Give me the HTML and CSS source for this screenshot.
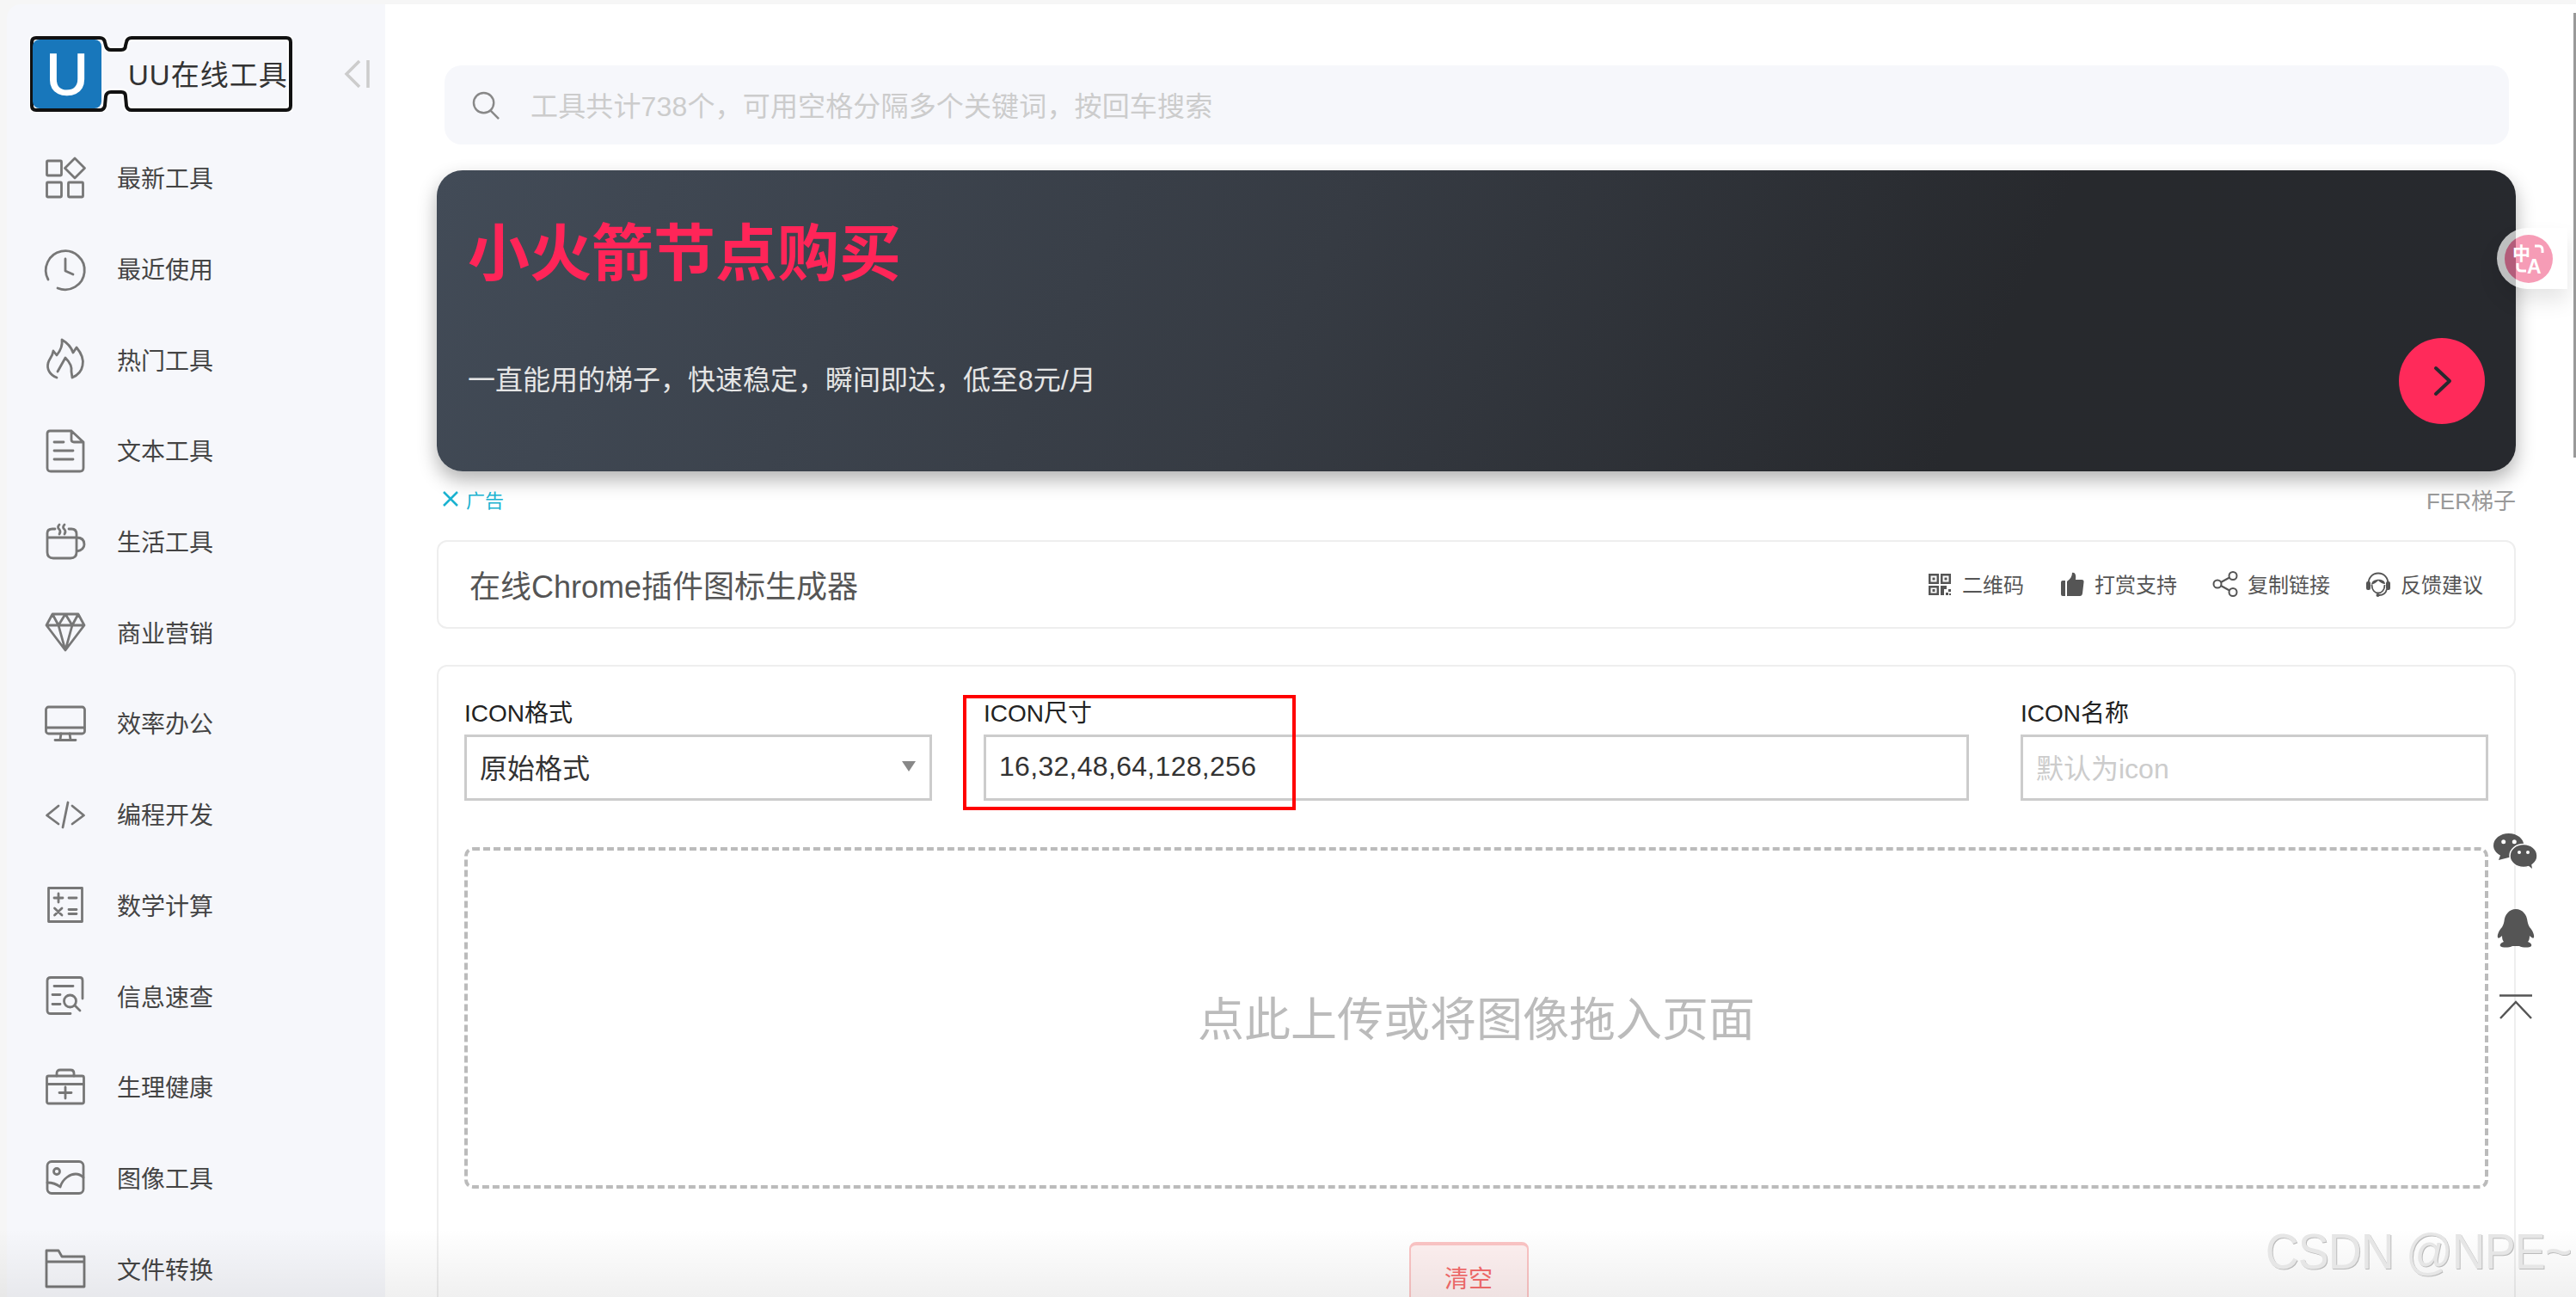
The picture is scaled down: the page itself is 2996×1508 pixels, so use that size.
FILE: index.html
```html
<!DOCTYPE html>
<html lang="zh-CN">
<head>
  <meta charset="utf-8">
  <title>在线Chrome插件图标生成器 - UU在线工具</title>
  <link rel="stylesheet" href="styles.css">
</head>
<body>
  <div class="app">
    <div class="sidebar">
      <div class="logo-row">
        <svg class="logo" viewBox="0 0 306 88">
          <path class="logo-halo" d="M8 2H82Q87 2 88 7L89 11Q90 16 95 16H107Q112 16 112 11L113 7Q114 2 119 2H299Q304 2 304 7V81Q304 86 299 86H119Q114 86 113 81L112 70Q112 65 107 65H95Q90 65 89 70L88 81Q87 86 82 86H8Q3 86 3 81V7Q3 2 8 2Z"/>
          <path class="logo-line" d="M8 2H82Q87 2 88 7L89 11Q90 16 95 16H107Q112 16 112 11L113 7Q114 2 119 2H299Q304 2 304 7V81Q304 86 299 86H119Q114 86 113 81L112 70Q112 65 107 65H95Q90 65 89 70L88 81Q87 86 82 86H8Q3 86 3 81V7Q3 2 8 2Z"/>
          <rect class="logo-box" x="4" y="4" width="80" height="80" rx="8"/>
          <text class="logo-u" x="44" y="68" text-anchor="middle">U</text>
          <text class="logo-name" x="115" y="57">UU在线工具</text>
        </svg>
        <svg class="collapse" viewBox="0 0 30 34"><path d="M18 2L3 17L18 32M28 1V33"/></svg>
      </div>
      <div class="menu">
        <div class="menu-item">
          <svg class="menu-icon" viewBox="0 0 48 48"><rect x="2.500" y="3" width="17" height="17" rx="1"/><path d="M35 0L46.500 11.500L35 23L23.500 11.500Z"/><rect x="2.500" y="28" width="17" height="17" rx="1"/><rect x="27.500" y="28" width="17" height="17" rx="1"/></svg>
          <span>最新工具</span>
        </div>
        <div class="menu-item">
          <svg class="menu-icon" viewBox="0 0 48 48"><path d="M15 45A22.500 22.500 0 1 0 4 35M24 11V25L33 29"/></svg>
          <span>最近使用</span>
        </div>
        <div class="menu-item">
          <svg class="menu-icon" viewBox="0 0 48 48"><path d="M14 44C6 41 2 34 4 27C5 22 9 20 10 13L14 18C18 13 21 7 20 0C27 4 31 9 33 15L37 9C42 15 46 22 44 30C43 36 39 41 32 44M15 37L24 21C28 25 32 31 31 37L32 44"/></svg>
          <span>热门工具</span>
        </div>
        <div class="menu-item">
          <svg class="menu-icon" viewBox="0 0 48 48"><path d="M6 0H31L45 13V43Q45 47 41 47H7Q3 47 3 43V3Q3 0 6 0ZM31 0V10Q31 13 34 13H45M11 13H22M11 23H33M11 33H33"/></svg>
          <span>文本工具</span>
        </div>
        <div class="menu-item">
          <svg class="menu-icon" viewBox="0 0 48 48"><path d="M3 18H37V35Q37 42 30 42H10Q3 42 3 35ZM3 18V13Q3 8 9 8H12M28 8H31Q37 8 37 14V18M37 18C44 18 46 22 46 26C46 30 43 33 37 34M17 3Q14 6 17 8.500Q19 11 17 14M23 3Q20 6 23 8.500Q25 11 23 14"/></svg>
          <span>生活工具</span>
        </div>
        <div class="menu-item">
          <svg class="menu-icon" viewBox="0 0 48 48"><path d="M9 2H39L46 15L24 44L2 15ZM2 15H46M9 2L16 15L24 2L32 15L39 2M16 15L24 44L32 15"/></svg>
          <span>商业营销</span>
        </div>
        <div class="menu-item">
          <svg class="menu-icon" viewBox="0 0 48 48"><rect x="1.500" y="4" width="45" height="31" rx="3"/><path d="M2 28H46M19 35L18 42M29 35L30 42M12 42.500H36"/></svg>
          <span>效率办公</span>
        </div>
        <div class="menu-item">
          <svg class="menu-icon" viewBox="0 0 48 48"><path d="M16 13L2.500 24L16 34M32 13L45.500 24L32 34M27 9L21 38"/></svg>
          <span>编程开发</span>
        </div>
        <div class="menu-item">
          <svg class="menu-icon" viewBox="0 0 48 48"><rect x="4.500" y="3.500" width="39" height="39"/><path d="M11 15H21M16 10V20M28 15H37M11.500 27L20 35M20 27L11.500 35M28 28.500H37M28 33.500H37"/></svg>
          <span>数学计算</span>
        </div>
        <div class="menu-item">
          <svg class="menu-icon" viewBox="0 0 48 48"><path d="M30 43.500H7Q3 43.500 3 40V5Q3 1.500 7 1.500H41Q44 1.500 44 5V26M11 11.500H33M9 21.500H18M9 32.500H18M35 34L41 40"/><circle cx="29.500" cy="29" r="7"/></svg>
          <span>信息速查</span>
        </div>
        <div class="menu-item">
          <svg class="menu-icon" viewBox="0 0 48 48"><rect x="2.500" y="10" width="43" height="32" rx="2"/><path d="M3 19.500H45M14 10V7Q14 3 18 3H30Q34 3 34 7V10M17 29.500H31M24 23V36"/></svg>
          <span>生理健康</span>
        </div>
        <div class="menu-item">
          <svg class="menu-icon" viewBox="0 0 48 48"><rect x="3" y="4.500" width="42" height="37" rx="5"/><circle cx="14" cy="16" r="3.500"/><path d="M3 29Q12 29 18 34C21 24 30 19 36 19Q41 19 45 23"/></svg>
          <span>图像工具</span>
        </div>
        <div class="menu-item">
          <svg class="menu-icon" viewBox="0 0 48 48"><path d="M2 2H16L20 9H46V44H2ZM2 15H46"/></svg>
          <span>文件转换</span>
        </div>
      </div>
    </div>

    <div class="main">
      <div class="search">
        <svg class="search-icon" viewBox="0 0 34 34"><circle cx="14" cy="14" r="12"/><path d="M22 23L32 33"/></svg>
        <span>工具共计738个，可用空格分隔多个关键词，按回车搜索</span>
      </div>

      <div class="banner">
        <div class="banner-text">
          <div class="banner-title">小火箭节点购买</div>
          <div class="banner-sub">一直能用的梯子，快速稳定，瞬间即达，低至8元/月</div>
        </div>
        <div class="banner-go">
          <svg viewBox="0 0 24 36"><path d="M4 3L20 18L4 33"/></svg>
        </div>
      </div>

      <div class="ad-row">
        <div class="ad-tag">
          <svg viewBox="0 0 20 20"><path d="M2 2L18 18M18 2L2 18"/></svg>
          <span>广告</span>
        </div>
        <div class="ad-name">FER梯子</div>
      </div>

      <div class="title-bar">
        <div class="page-title">在线Chrome插件图标生成器</div>
        <div class="actions">
          <div class="action">
            <svg viewBox="0 0 30 30"><path class="solid" fill-rule="evenodd" d="M2 3H14V15H2ZM4.500 5.500V12.500H11.500V5.500ZM6.500 7.500H9.500V10.500H6.500ZM16 3H28V15H16ZM18.500 5.500V12.500H25.500V5.500ZM20.500 7.500H23.500V10.500H20.500ZM2 17H14V28H2ZM4.500 19.500V25.500H11.500V19.500ZM6.500 21H9.500V24H6.500ZM16 17H23V21H28V24H25V21H20V28H16ZM22 25H25V28H22ZM26 26H28V28H26Z"/></svg>
            <span>二维码</span>
          </div>
          <div class="action">
            <svg viewBox="0 0 30 30"><path class="solid" d="M2 13Q2 11 4 11H7V29H4Q2 29 2 27ZM9 12C13 9 15 6 15 2C18 1 20 4 19 10H26Q29 10 28.500 13L27 26Q26.500 29 24 29H9Z"/></svg>
            <span>打赏支持</span>
          </div>
          <div class="action">
            <svg class="outline" viewBox="0 0 30 30"><circle cx="6" cy="15" r="4.500"/><circle cx="24" cy="5.500" r="4.500"/><circle cx="24" cy="24.500" r="4.500"/><path d="M10 13L20 7.500M10 17L20 22.500"/></svg>
            <span>复制链接</span>
          </div>
          <div class="action">
            <svg class="headset" viewBox="0 0 30 30">
              <path d="M3.500 15C3.500 8 8 2.500 15 2.500C22 2.500 26.500 8 26.500 15M7.500 16C7.500 22 11 25.500 15 25.500C19 25.500 22.500 22 22.500 16M25 21C24 25 21 28 16 28"/>
              <path class="solid" d="M7 16C7 8 23 8 23 15C20 15 17 13 15 11C13 13 10 15 7 16Z"/>
              <rect class="solid" x="1" y="12" width="5" height="10" rx="2"/>
              <rect class="solid" x="24" y="12" width="5" height="10" rx="2"/>
              <circle class="solid" cx="14.500" cy="28" r="2"/>
            </svg>
            <span>反馈建议</span>
          </div>
        </div>
      </div>

      <div class="card">
        <div class="form-row">
          <div class="field">
            <div class="field-label">ICON格式</div>
            <div class="control control-select">
              <span>原始格式</span>
              <i class="select-arrow"></i>
            </div>
          </div>
          <div class="field">
            <div class="field-label">ICON尺寸</div>
            <div class="control control-value">16,32,48,64,128,256</div>
            <div class="red-mark"></div>
          </div>
          <div class="field">
            <div class="field-label">ICON名称</div>
            <div class="control control-empty">默认为icon</div>
          </div>
        </div>
        <div class="dropzone"><span>点此上传或将图像拖入页面</span></div>
        <div class="btn-row">
          <div class="btn-clear">清空</div>
        </div>
      </div>
    </div>

    <div class="translate">
      <svg viewBox="0 0 56 56">
        <text class="tr-zh" x="9" y="29">中</text>
        <text class="tr-en" x="26" y="45">A</text>
        <path d="M35 13H40Q44 13 44 18V21M15 33V38Q15 42 20 42H25"/>
      </svg>
    </div>

    <div class="float-tools">
      <svg class="tool-wechat" viewBox="0 0 51 41">
        <path class="solid" d="M17.700 0C27.500 0 35.400 6.300 35.400 14C35.400 21.700 27.500 28 17.700 28L6 31L8 25.500C3 23 0 18.800 0 14C0 6.300 7.900 0 17.700 0Z"/>
        <ellipse class="bubble" cx="35" cy="26" rx="16" ry="13.500"/>
        <path class="solid" d="M40 37L45 41L44 35Z"/>
        <circle class="eye" cx="11.700" cy="9.700" r="2.500"/>
        <circle class="eye" cx="24.300" cy="9.700" r="2.500"/>
        <circle class="eye" cx="30" cy="22" r="2"/>
        <circle class="eye" cx="40" cy="22" r="2"/>
      </svg>
      <svg class="tool-qq" viewBox="0 0 44 45"><path class="solid" d="M22 0C30 0 35 7 35.500 14C36 17 37 19 38 21C41 24 44 30 43 33C42 35 39 32 38 31C38 35 37 37 36 38C39 39 41 41 40 43C38 45 30 45 26 43H18C14 45 6 45 4 43C3 41 5 39 8 38C7 37 6 35 6 31C5 32 2 35 1 33C0 30 3 24 6 21C7 19 8 17 8.500 14C9 7 14 0 22 0Z"/></svg>
      <svg class="tool-top" viewBox="0 0 38 29"><path d="M0 1.500H38M1 28L19 9L37 28"/></svg>
    </div>

    <div class="scroll-thumb"></div>
    <div class="bottom-fade"></div>
    <div class="watermark">CSDN @NPE~</div>
  </div>
</body>
</html>
```

FILE: styles.css
```css
* {
  box-sizing: border-box;
}

body {
  margin: 0;
  font-family: "Liberation Sans", "Noto Sans CJK SC", sans-serif;
}

.app {
  position: relative;
  display: flex;
  width: 2996px;
  height: 1508px;
  padding: 5px 0 0 8px;
  overflow: hidden;
  background-color: #f6f6f6;
}

.solid {
  fill: #555;
}

/* sidebar */
.sidebar {
  flex: 0 0 440px;
  background-color: #f6f7fb;
  border-top-left-radius: 16px;
}

.logo-row {
  display: flex;
  align-items: center;
  gap: 60px;
  padding: 37px 0 0 26px;
}

.logo {
  width: 306px;
  height: 88px;
}

.logo-halo {
  fill: none;
  stroke: #fff;
  stroke-width: 8;
}

.logo-line {
  fill: none;
  stroke: #111;
  stroke-width: 4;
}

.logo-box {
  fill: #1877bb;
}

.logo-u {
  fill: #fff;
  stroke: #fff;
  stroke-width: 1.500;
  font-size: 68px;
}

.logo-name {
  fill: #333;
  font-size: 33px;
  letter-spacing: 1px;
}

.collapse {
  width: 30px;
  height: 34px;
  fill: none;
  stroke: #ccc;
  stroke-width: 3.500;
}

.menu {
  margin-top: 25px;
}

.menu-item {
  display: flex;
  align-items: center;
  gap: 36px;
  height: 105.700px;
  padding-left: 44px;
  font-size: 28px;
  color: #444;
}

.menu-item span {
  margin-bottom: 3px;
}

.menu-icon {
  flex: none;
  width: 48px;
  height: 48px;
  overflow: visible;
  fill: none;
  stroke: #777;
  stroke-width: 2.800;
  stroke-linejoin: round;
  stroke-linecap: round;
}

/* main column */
.main {
  flex: 1;
  min-width: 0;
  padding: 71px 70px 0 60px;
  background-color: #fff;
}

.search {
  display: flex;
  align-items: center;
  gap: 35px;
  height: 92px;
  margin: 0 8px 0 9px;
  padding-left: 32px;
  background-color: #f6f7fb;
  border-radius: 20px;
  font-size: 32px;
  letter-spacing: 0.150px;
  color: #ccc;
}

.search span {
  margin-bottom: 3px;
}

.search-icon {
  width: 33px;
  height: 33px;
  fill: none;
  stroke: #888;
  stroke-width: 2.500;
}

.banner {
  display: flex;
  justify-content: space-between;
  height: 350px;
  margin-top: 30px;
  padding: 57px 36px 55px;
  background: linear-gradient(115deg, #424b57 0%, #363b43 42%, #27292d 74%, #27292e 100%);
  border-radius: 30px;
  box-shadow: 0 10px 22px rgba(0, 0, 0, 0.3);
}

.banner-title {
  height: 80px;
  font-size: 72px;
  font-weight: 700;
  line-height: 80px;
  color: #ff2558;
}

.banner-sub {
  margin-top: 85px;
  font-size: 32px;
  line-height: 44px;
  color: #e5e5e5;
}

.banner-go {
  display: flex;
  align-items: center;
  justify-content: center;
  align-self: flex-end;
  width: 100px;
  height: 100px;
  background-color: #ff2a5a;
  border-radius: 50%;
}

.banner-go svg {
  width: 24px;
  height: 42px;
  margin-left: 2px;
  fill: none;
  stroke: #27292e;
  stroke-width: 4;
  stroke-linecap: round;
  stroke-linejoin: round;
}

.ad-row {
  display: flex;
  justify-content: space-between;
  align-items: center;
  height: 26px;
  margin-top: 19px;
  padding-left: 6px;
}

.ad-tag {
  display: flex;
  align-items: center;
  gap: 8px;
  font-size: 22px;
  color: #1ab2d0;
}

.ad-tag svg {
  width: 20px;
  height: 20px;
  fill: none;
  stroke: #1ab2d0;
  stroke-width: 2.500;
}

.ad-name {
  font-size: 26px;
  color: #999;
}

.title-bar {
  display: flex;
  justify-content: space-between;
  align-items: center;
  height: 103px;
  margin-top: 35px;
  padding: 0 36px 2px 36px;
  border: 2px solid #eee;
  border-radius: 12px;
}

.page-title {
  font-size: 36px;
  color: #555;
}

.actions {
  display: flex;
  gap: 41px;
}

.action {
  display: flex;
  align-items: center;
  gap: 11px;
  font-size: 24px;
  color: #555;
}

.action svg {
  width: 30px;
  height: 30px;
}

.action .outline {
  fill: none;
  stroke: #555;
  stroke-width: 2;
}

.action .headset {
  fill: none;
  stroke: #555;
  stroke-width: 1.800;
}

.headset .solid {
  stroke: none;
}

.card {
  height: 900px;
  margin-top: 42px;
  padding: 37px 30px 0 30px;
  border: 2px solid #eee;
  border-radius: 12px;
}

.form-row {
  display: grid;
  grid-template-columns: 544px 1fr 544px;
  gap: 60px;
}

.field {
  position: relative;
}

.field-label {
  height: 36px;
  margin-bottom: 6px;
  font-size: 28px;
  line-height: 36px;
  color: #222;
}

.control {
  display: flex;
  align-items: center;
  height: 77px;
  padding: 0 0 3px 15px;
  border: 3px solid #ccc;
  font-size: 32px;
  color: #333;
}

.control-select {
  justify-content: space-between;
  padding-right: 16px;
}

.control-value {
  letter-spacing: 0.300px;
}

.control-empty {
  color: #ccc;
}

.select-arrow {
  width: 0;
  height: 0;
  border-style: solid;
  border-width: 12px 8px 0;
  border-color: #888 transparent transparent;
}

.red-mark {
  position: absolute;
  top: -4px;
  left: -24px;
  width: 387px;
  height: 134px;
  border: 4px solid #f00;
}

.dropzone {
  display: flex;
  align-items: center;
  justify-content: center;
  height: 397px;
  margin-top: 54px;
  border: 4px dashed #bbb;
  border-radius: 10px;
  font-size: 54px;
  color: #bbb;
}

.dropzone span {
  margin-bottom: 4px;
}

.btn-row {
  display: flex;
  justify-content: center;
  margin-top: 62px;
  padding-right: 18px;
}

.btn-clear {
  width: 139px;
  height: 90px;
  padding-top: 20px;
  background-color: #fef0f0;
  border: 2px solid #fbc4c4;
  border-top-width: 4px;
  border-radius: 8px;
  font-size: 28px;
  line-height: 40px;
  text-align: center;
  color: #f56c6c;
}

/* things floating over the page */
.translate {
  position: absolute;
  top: 265px;
  left: 2904px;
  width: 82px;
  height: 71px;
  padding: 8px 0 0 9px;
  background-color: rgba(255, 255, 255, 0.7);
  border-radius: 36px 0 0 36px;
  box-shadow: 0 14px 24px rgba(0, 0, 0, 0.1);
}

.translate svg {
  display: block;
  width: 56px;
  height: 56px;
  background: linear-gradient(to right, #b35c7a 13px, #f69cb6 13px);
  border-radius: 50%;
}

.translate path {
  fill: none;
  stroke: #fff;
  stroke-width: 3;
}

.tr-zh {
  fill: #fff;
  font-size: 21px;
  font-weight: 700;
}

.tr-en {
  fill: #fff;
  font-size: 23px;
  font-weight: 700;
}

.float-tools {
  position: absolute;
  top: 969px;
  left: 2900px;
  display: flex;
  flex-direction: column;
  align-items: center;
  width: 51px;
}

.tool-wechat {
  width: 51px;
  height: 41px;
}

.bubble {
  fill: #555;
  stroke: #fff;
  stroke-width: 1.500;
}

.eye {
  fill: #fff;
}

.tool-qq {
  width: 44px;
  height: 45px;
  margin-top: 47px;
}

.tool-top {
  width: 38px;
  height: 29px;
  margin-top: 54px;
  fill: none;
  stroke: #555;
  stroke-width: 2.500;
}

.scroll-thumb {
  position: absolute;
  top: 15px;
  right: 0;
  width: 3px;
  height: 517px;
  background-color: #999;
}

.bottom-fade {
  position: absolute;
  left: 0;
  right: 0;
  bottom: 0;
  height: 80px;
  background: linear-gradient(to bottom, rgba(0, 0, 0, 0), rgba(0, 0, 0, 0.06));
}

.watermark {
  position: absolute;
  right: 6px;
  bottom: 24px;
  font-size: 58px;
  letter-spacing: -1px;
  line-height: 58px;
  color: #e6e6e6;
  text-shadow: 1px 1px 0 #bbb;
  transform: scaleX(0.93);
  transform-origin: right center;
}
```
